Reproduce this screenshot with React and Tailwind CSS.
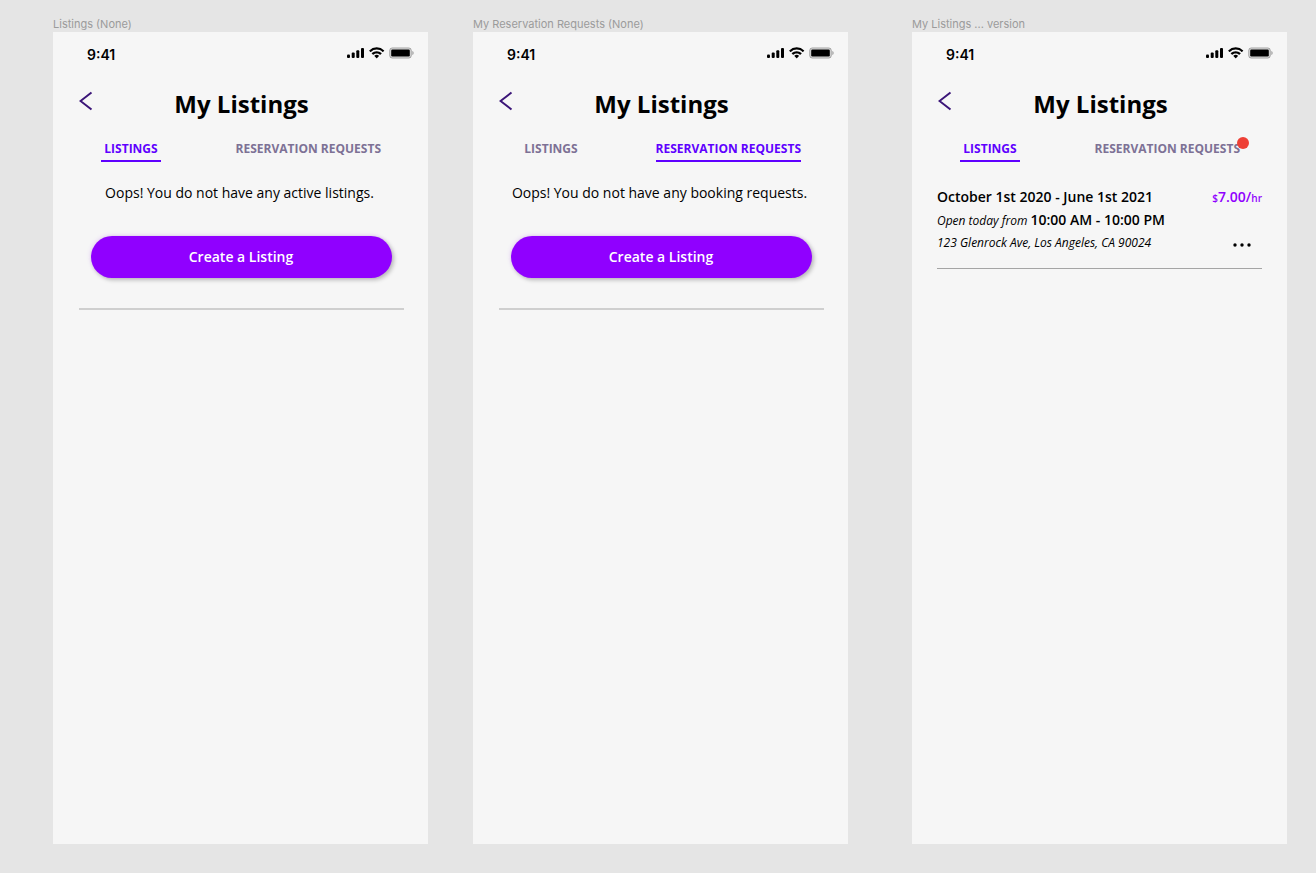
import React from "react";

function StatusBar() {
  return (
    <div className="flex h-11 items-center justify-between pl-[34px] pr-[14px]">
      <span className="pt-[2px] font-['Inter',sans-serif] text-sm leading-5 font-semibold">9:41</span>
      <svg width="67" height="12" viewBox="0 0 67 12" className="mb-[2px]" aria-hidden="true">
        <rect x="0" y="7.500" width="3" height="3.500" rx="1" />
        <rect x="4.700" y="5.500" width="3" height="5.500" rx="1" />
        <rect x="9.300" y="3.200" width="3" height="7.800" rx="1" />
        <rect x="14" y="1" width="3" height="10" rx="1" />
        <path d="M29.7 2.6c2.2 0 4.3.8 5.9 2.4.1.1.3.1.4 0l1.2-1.2c.1-.1.1-.3 0-.4a10.800 10.800 0 0 0-15 0c-.1.1-.1.3 0 .4L23.400 5c.1.1.3.1.4 0a8.600 8.600 0 0 1 5.900-2.400zm0 3.800c1.200 0 2.400.5 3.300 1.300.1.1.3.1.4 0l1.200-1.200c.1-.1.1-.3 0-.4a7.100 7.100 0 0 0-9.800 0c-.1.1-.1.3 0 .4L26 7.700c.1.1.3.1.4 0 .9-.8 2.100-1.300 3.300-1.300zm2.300 2.700c.1-.1.1-.3 0-.4a3.600 3.600 0 0 0-4.600 0c-.1.1-.1.3 0 .4l2.100 2.100c.1.1.3.1.4 0z" />
        <rect x="42.700" y="0.900" width="21.600" height="10.200" rx="2.600" fillOpacity="0.120" stroke="#000" strokeOpacity="0.280" />
        <path d="M65.300 4v4c.8-.3 1.400-1.100 1.400-2s-.6-1.700-1.400-2z" fillOpacity="0.350" />
        <rect x="44.200" y="2.500" width="18.600" height="7" rx="1.200" />
      </svg>
    </div>
  );
}

function Header() {
  return (
    <header className="grid grid-cols-[1fr_auto_1fr] items-center pt-2 pr-6 pl-[26px]">
      <a href="#back" aria-label="Back" className="mb-[6px] justify-self-start">
        <svg width="14" height="20" viewBox="0 0 14 20" fill="none" stroke="#3b1578" strokeWidth="2">
          <path d="M12.500 1.500 1.500 10l11 8.500" />
        </svg>
      </a>
      <h1 className="text-2xl leading-10 font-bold">My Listings</h1>
    </header>
  );
}

const activeTab = "border-[#5f00ff] text-[#5f00ff]";
const idleTab = "border-transparent text-[#7d7195]";

function Tabs({ active, notify }) {
  return (
    <nav className="flex justify-between pr-[47px] pl-12 text-xs leading-4 font-bold">
      <button
        type="button"
        className={`w-[60px] border-b-2 pt-[17px] pb-[3px] text-center ${active === "listings" ? activeTab : idleTab}`}
      >
        LISTINGS
      </button>
      <button
        type="button"
        className={`relative border-b-2 pt-[17px] pb-[3px] ${active === "requests" ? activeTab : idleTab}`}
      >
        RESERVATION REQUESTS
        {notify && <span className="absolute top-[13px] -right-[9px] size-3 rounded-full bg-[#ee4036]" />}
      </button>
    </nav>
  );
}

function Screen({ label, active, notify, className = "", children }) {
  return (
    <section className={`flex min-w-0 flex-1 flex-col ${className}`}>
      <h2 className="truncate font-['Inter',sans-serif] text-[11px] leading-4 text-[#9b9b9b]">{label}</h2>
      <div className="flex-1 bg-[#f6f6f6]">
        <StatusBar />
        <Header />
        <Tabs active={active} notify={notify} />
        {children}
      </div>
    </section>
  );
}

function EmptyState({ message }) {
  return (
    <div className="pt-[19px] pr-6 pl-[26px] text-center text-sm">
      <p className="pr-1 leading-6">{message}</p>
      <button
        type="button"
        className="mx-3 mt-[31px] block h-[42px] w-[calc(100%-24px)] rounded-full bg-[#9000ff] pr-px font-semibold text-white shadow-[2px_2px_4px_rgba(0,0,0,0.25),-1px_-1px_4px_rgba(144,0,255,0.12)]"
      >
        Create a Listing
      </button>
      <hr className="mt-[30px] border-t-2 border-[#cfcfcf]" />
    </div>
  );
}

function Listing() {
  return (
    <article className="mx-[25px] mt-[23px] border-b border-[#a5a5a5] pb-[14px]">
      <div className="flex justify-between text-sm leading-[23px] font-semibold">
        <h3>October 1st 2020 - June 1st 2021</h3>
        <p className="text-[#9000ff]">
          <span className="text-[10px] leading-none">$</span>7.00/
          <span className="text-[10px] leading-none">hr</span>
        </p>
      </div>
      <p className="text-sm leading-[23px] font-semibold">
        <span className="text-xs font-normal italic">Open today from </span>10:00 AM - 10:00 PM
      </p>
      <div className="flex items-center justify-between pr-[11px]">
        <p className="text-xs leading-[23px] italic">123 Glenrock Ave, Los Angeles, CA 90024</p>
        <button type="button" aria-label="More options">
          <svg width="18" height="4" viewBox="0 0 18 4" className="mt-1">
            <circle cx="2" cy="2" r="1.700" />
            <circle cx="9" cy="2" r="1.700" />
            <circle cx="16" cy="2" r="1.700" />
          </svg>
        </button>
      </div>
    </article>
  );
}

export default function App() {
  return (
    <main className="flex min-h-screen bg-[#e5e5e5] pt-4 pr-[29px] pb-[29px] pl-[53px] font-['Open_Sans',sans-serif] text-black">
      <Screen label="Listings (None)" active="listings">
        <EmptyState message="Oops! You do not have any active listings." />
      </Screen>
      <Screen label="My Reservation Requests (None)" active="requests" className="ml-[45px]">
        <EmptyState message="Oops! You do not have any booking requests." />
      </Screen>
      <Screen label="My Listings ... version" active="listings" notify className="ml-16">
        <Listing />
      </Screen>
    </main>
  );
}
